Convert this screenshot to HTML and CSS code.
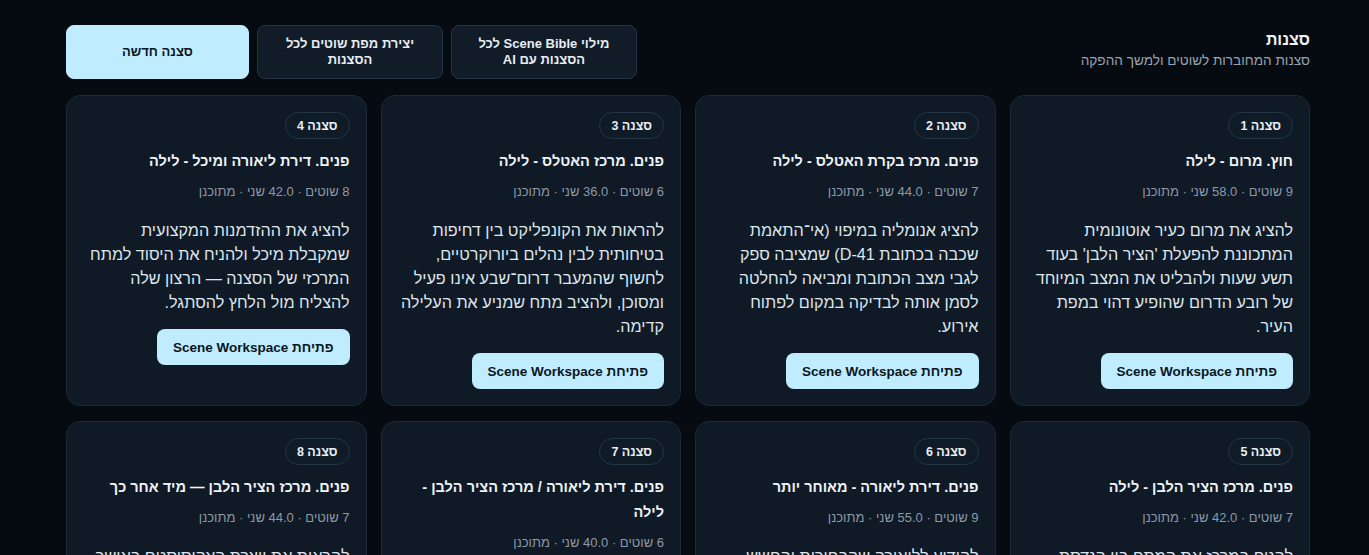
FILE: index.html
```html
<!DOCTYPE html>
<html lang="he" dir="rtl">
<head>
<meta charset="utf-8">
<title>סצנות</title>
<link rel="stylesheet" href="styles.css">
</head>
<body>
<div class="page">
  <header class="head">
    <div class="head-text">
      <h1 class="title">סצנות</h1>
      <p class="subtitle">סצנות המחוברות לשוטים ולמשך ההפקה</p>
    </div>
    <div class="actions">
      <button class="btn btn-dark">מילוי Scene Bible לכל הסצנות עם AI</button>
      <button class="btn btn-dark">יצירת מפת שוטים לכל הסצנות</button>
      <button class="btn btn-light">סצנה חדשה</button>
    </div>
  </header>

  <main class="grid">
    <article class="card">
      <span class="badge">סצנה 1</span>
      <h2 class="card-title">חוץ. מרום - לילה</h2>
      <p class="meta">9 שוטים · 58.0 שני · מתוכנן</p>
      <p class="desc">להציג את מרום כעיר אוטונומית המתכוננת להפעלת 'הציר הלבן' בעוד תשע שעות ולהבליט את המצב המיוחד של רובע הדרום שהופיע דהוי במפת העיר.</p>
      <button class="open">פתיחת Scene Workspace</button>
    </article>
    <article class="card">
      <span class="badge">סצנה 2</span>
      <h2 class="card-title">פנים. מרכז בקרת האטלס - לילה</h2>
      <p class="meta">7 שוטים · 44.0 שני · מתוכנן</p>
      <p class="desc">להציג אנומליה במיפוי (אי־התאמת שכבה בכתובת D-41) שמציבה ספק לגבי מצב הכתובת ומביאה להחלטה לסמן אותה לבדיקה במקום לפתוח אירוע.</p>
      <button class="open">פתיחת Scene Workspace</button>
    </article>
    <article class="card">
      <span class="badge">סצנה 3</span>
      <h2 class="card-title">פנים. מרכז האטלס - לילה</h2>
      <p class="meta">6 שוטים · 36.0 שני · מתוכנן</p>
      <p class="desc">להראות את הקונפליקט בין דחיפות בטיחותית לבין נהלים ביורוקרטיים, לחשוף שהמעבר דרום־שבע אינו פעיל ומסוכן, ולהציב מתח שמניע את העלילה קדימה.</p>
      <button class="open">פתיחת Scene Workspace</button>
    </article>
    <article class="card">
      <span class="badge">סצנה 4</span>
      <h2 class="card-title">פנים. דירת ליאורה ומיכל - לילה</h2>
      <p class="meta">8 שוטים · 42.0 שני · מתוכנן</p>
      <p class="desc">להציג את ההזדמנות המקצועית שמקבלת מיכל ולהניח את היסוד למתח המרכזי של הסצנה — הרצון שלה להצליח מול הלחץ להסתגל.</p>
      <button class="open">פתיחת Scene Workspace</button>
    </article>

    <article class="card">
      <span class="badge">סצנה 5</span>
      <h2 class="card-title">פנים. מרכז הציר הלבן - לילה</h2>
      <p class="meta">7 שוטים · 42.0 שני · מתוכנן</p>
      <p class="desc">להניח במרכז את המתח בין הנדסת המערכת לבין האנשים שמפעילים אותה, ולהראות את הרגע שבו הכול מתחיל להשתבש.</p>
      <button class="open">פתיחת Scene Workspace</button>
    </article>
    <article class="card">
      <span class="badge">סצנה 6</span>
      <h2 class="card-title">פנים. דירת ליאורה - מאוחר יותר</h2>
      <p class="meta">9 שוטים · 55.0 שני · מתוכנן</p>
      <p class="desc">להודיע לליאורה שהבחירות והחשש שלה מתנגשים, ולחשוף את המחיר האישי של ההחלטה.</p>
      <button class="open">פתיחת Scene Workspace</button>
    </article>
    <article class="card">
      <span class="badge">סצנה 7</span>
      <h2 class="card-title">פנים. דירת ליאורה / מרכז הציר הלבן - לילה</h2>
      <p class="meta">6 שוטים · 40.0 שני · מתוכנן</p>
      <p class="desc">לחבר בין שני העולמות ולהראות כיצד ההחלטה בבית משפיעה על מה שקורה במרכז.</p>
      <button class="open">פתיחת Scene Workspace</button>
    </article>
    <article class="card">
      <span class="badge">סצנה 8</span>
      <h2 class="card-title">פנים. מרכז הציר הלבן — מיד אחר כך</h2>
      <p class="meta">7 שוטים · 44.0 שני · מתוכנן</p>
      <p class="desc">להראות את יוצרת האקוסיסטם באושר ובחשש, ולסגור את המערכה הראשונה.</p>
      <button class="open">פתיחת Scene Workspace</button>
    </article>
  </main>
</div>
</body>
</html>
```

FILE: styles.css
```css
* { box-sizing: border-box; }

html, body {
  margin: 0;
  padding: 0;
  background: #060b12;
  color: #e6edf3;
  font-family: "Liberation Sans", Arial, sans-serif;
}

.page {
  padding: 25px 59px 40px 66px;
}

.head {
  display: flex;
  justify-content: space-between;
  align-items: flex-start;
  margin-bottom: 16px;
}

.head-text {
  padding-top: 4px;
}

.title {
  margin: 0;
  font-size: 16px;
  line-height: 22px;
  font-weight: 700;
  color: #eef3f8;
}

.subtitle {
  margin: 0;
  font-size: 13.6px;
  line-height: 20px;
  color: #97a3b0;
}

.actions {
  display: flex;
  gap: 8px;
}

.btn {
  font-family: inherit;
  font-size: 13px;
  font-weight: 700;
  line-height: 16px;
  height: 54px;
  border-radius: 8px;
  padding: 0 16px;
  cursor: pointer;
}

.btn-dark {
  width: 186px;
  background: #111c28;
  color: #e6edf3;
  border: 1px solid #243444;
}

.btn-light {
  width: 183px;
  background: #bfedff;
  color: #0b1620;
  border: 1px solid #bfedff;
}

.grid {
  display: grid;
  grid-template-columns: repeat(4, 1fr);
  gap: 15px 14px;
}

.card {
  background: #0f1a26;
  border: 1px solid #1c2936;
  border-radius: 14px;
  padding: 16px;
  display: flex;
  flex-direction: column;
  align-items: flex-start;
}

.badge {
  display: inline-flex;
  align-items: center;
  height: 27px;
  padding: 0 11px;
  border: 1px solid #243646;
  border-radius: 14px;
  font-size: 12.5px;
  font-weight: 700;
  color: #e6edf3;
  background: #0f1b27;
}

.card-title {
  margin: 10px 0 0;
  font-size: 14.5px;
  line-height: 25px;
  font-weight: 700;
  color: #eef3f8;
}

.meta {
  margin: 8px 0 0;
  font-size: 13px;
  line-height: 20px;
  color: #8d99a6;
}

.desc {
  margin: 16px 0 0;
  font-size: 16.2px;
  line-height: 24px;
  color: #dde5ed;
}

.open {
  margin-top: 15px;
  height: 36px;
  padding: 0 16px;
  border: 0;
  border-radius: 8px;
  background: #bfedff;
  color: #0b1620;
  font-family: inherit;
  font-size: 13.5px;
  font-weight: 700;
  cursor: pointer;
}
```
